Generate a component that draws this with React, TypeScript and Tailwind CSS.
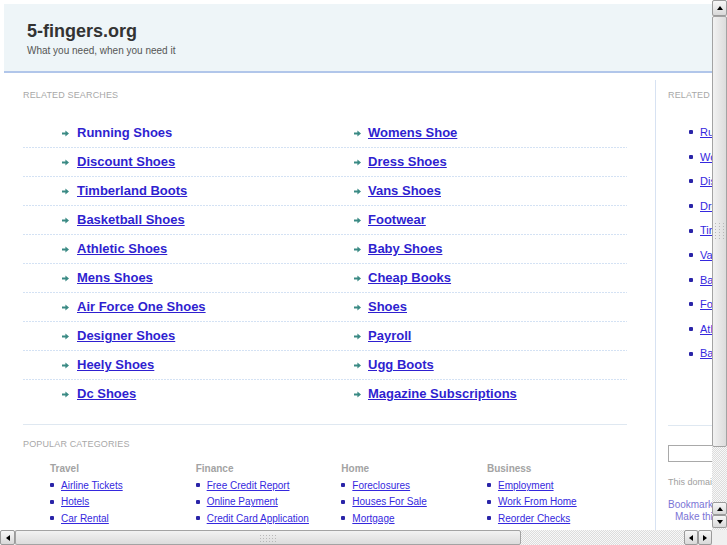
import React from "react";

const leftCol1 = [
  "Running Shoes",
  "Discount Shoes",
  "Timberland Boots",
  "Basketball Shoes",
  "Athletic Shoes",
  "Mens Shoes",
  "Air Force One Shoes",
  "Designer Shoes",
  "Heely Shoes",
  "Dc Shoes",
];
const leftCol2 = [
  "Womens Shoe",
  "Dress Shoes",
  "Vans Shoes",
  "Footwear",
  "Baby Shoes",
  "Cheap Books",
  "Shoes",
  "Payroll",
  "Ugg Boots",
  "Magazine Subscriptions",
];
const sideLinks = [
  "Running Shoes",
  "Womens Shoe",
  "Discount Shoes",
  "Dress Shoes",
  "Timberland Boots",
  "Vans Shoes",
  "Basketball Shoes",
  "Footwear",
  "Athletic Shoes",
  "Baby Shoes",
];
const cats = [
  { t: "Travel", l: ["Airline Tickets", "Hotels", "Car Rental"] },
  { t: "Finance", l: ["Free Credit Report", "Online Payment", "Credit Card Application"] },
  { t: "Home", l: ["Foreclosures", "Houses For Sale", "Mortgage"] },
  { t: "Business", l: ["Employment", "Work From Home", "Reorder Checks"] },
];

function Arrow() {
  return (
    <svg width="7" height="7" viewBox="0 0 7 7" className="shrink-0">
      <path d="M0 2.6h3.4V0.4L7 3.5 3.4 6.6V4.4H0z" fill="#3a8a84" />
    </svg>
  );
}

function Bullet() {
  return <span className="w-[4px] h-[4px] rounded-[1px] bg-[#2a24a8] shrink-0" />;
}

function Btn({ dir }: { dir: "up" | "down" | "left" | "right" }) {
  const tri =
    dir === "up"
      ? "border-l-[3px] border-r-[3px] border-b-[4px] border-l-transparent border-r-transparent border-b-black"
      : dir === "down"
      ? "border-l-[3px] border-r-[3px] border-t-[4px] border-l-transparent border-r-transparent border-t-black"
      : dir === "left"
      ? "border-t-[3px] border-b-[3px] border-r-[4px] border-t-transparent border-b-transparent border-r-black"
      : "border-t-[3px] border-b-[3px] border-l-[4px] border-t-transparent border-b-transparent border-l-black";
  return (
    <div className="flex items-center justify-center w-full h-full border border-[#9b9b9b] rounded-[2px] bg-gradient-to-b from-[#f7f7f7] to-[#d9d9d9]">
      <div className={"w-0 h-0 " + tri} />
    </div>
  );
}

function Grip({ vertical }: { vertical: boolean }) {
  const dots = Array.from({ length: 18 });
  return (
    <div
      className={
        vertical
          ? "grid grid-cols-3 gap-[2px] w-[10px]"
          : "grid grid-cols-6 gap-[2px] h-[6px]"
      }
    >
      {dots.map((_, i) => (
        <span key={i} className="w-[1px] h-[1px] bg-[#b8b8b8]" />
      ))}
    </div>
  );
}

export default function App() {
  return (
    <div className="w-[727px] h-[545px] overflow-hidden grid grid-cols-[712px_15px] grid-rows-[530px_15px] bg-white font-['Liberation_Sans',Arial,sans-serif]">
      {/* content viewport */}
      <div className="overflow-hidden">
        <div className="w-[1000px] pl-[4px] pt-[4px]">
          <header className="h-[69px] bg-[#eef5f8] border-b-2 border-[#b1c6ea] pl-[23px] pt-[16px]">
            <div className="text-[18px] leading-[22px] font-bold text-[#333333]">5-fingers.org</div>
            <div className="mt-[3px] text-[10px] leading-[12px] text-[#555555]">What you need, when you need it</div>
          </header>
          <div className="flex mt-[7px]">
            {/* left column */}
            <div className="w-[652px] shrink-0 border-r border-[#d7e2f2] pl-[19px] pt-[9px] h-[460px]">
              <div className="text-[9px] leading-[12px] tracking-[0.15px] text-[#a8a8a8]">RELATED SEARCHES</div>
              <div className="w-[604px] mt-[18px]">
                {leftCol1.map((a, i) => (
                  <div
                    key={a}
                    className={
                      "h-[29px] flex items-center pl-[39px] pb-[1px] " +
                      (i < 9
                        ? "bg-[linear-gradient(to_right,#a9c4e8_1px,transparent_1px)] bg-[length:3px_1px] bg-repeat-x bg-bottom"
                        : "")
                    }
                  >
                    <div className="w-[292px] flex items-center gap-[8px]">
                      <Arrow />
                      <a className={"text-[13px] font-bold text-[#2f1fd0] " + (i === 0 ? "" : "underline")}>{a}</a>
                    </div>
                    <div className="flex items-center gap-[7px]">
                      <Arrow />
                      <a className="text-[13px] font-bold text-[#2f1fd0] underline">{leftCol2[i]}</a>
                    </div>
                  </div>
                ))}
              </div>
              <div className="w-[604px] mt-[15px] border-t border-[#dfe8f1]" />
              <div className="mt-[13px] text-[9px] leading-[12px] tracking-[0.15px] text-[#a8a8a8]">POPULAR CATEGORIES</div>
              <div className="mt-[11px] pl-[27px] flex">
                {cats.map((c) => (
                  <div key={c.t} className="w-[145.67px] shrink-0">
                    <div className="text-[10px] leading-[16.33px] font-bold text-[#a3a3a3]">{c.t}</div>
                    {c.l.map((l) => (
                      <div key={l} className="h-[16.33px] flex items-center gap-[7px]">
                        <Bullet />
                        <a className="text-[10px] text-[#3528de] underline whitespace-nowrap">{l}</a>
                      </div>
                    ))}
                  </div>
                ))}
              </div>
            </div>
            {/* right sidebar */}
            <div className="pl-[12px] pt-[9px] w-[220px]">
              <div className="text-[9px] leading-[12px] tracking-[0.15px] text-[#a8a8a8]">RELATED SEARCHES</div>
              <div className="mt-[19px] pl-[21px]">
                {sideLinks.map((l) => (
                  <div key={l} className="h-[24.6px] flex items-center gap-[7px]">
                    <Bullet />
                    <a className="text-[11px] text-[#3528de] underline whitespace-nowrap">{l}</a>
                  </div>
                ))}
              </div>
              <div className="mt-[59px] w-[180px] border-t border-[#dfe8f1]" />
              <div className="mt-[19px] w-[160px] h-[17px] border border-[#a9a9a9] bg-white" />
              <div className="mt-[14px] text-[9px] leading-[12px] text-[#a0a0a0] whitespace-nowrap">This domain may be for sale</div>
              <div className="mt-[11px] text-[10px] leading-[12px] text-[#7b74d6] whitespace-nowrap">Bookmark this page</div>
              <div className="pl-[7px] text-[10px] leading-[12px] text-[#7b74d6] whitespace-nowrap">Make this your homepage</div>
            </div>
          </div>
        </div>
      </div>
      {/* vertical scrollbar */}
      <div className="flex flex-col bg-[repeating-conic-gradient(#dcdcdc_0_25%,#f8f8f8_0_50%)] bg-[length:2px_2px]">
        <div className="h-[16px]"><Btn dir="up" /></div>
        <div className="h-[431px] flex items-center justify-center border border-[#a3a3a3] rounded-[2px] bg-gradient-to-r from-[#f2f2f2] to-[#dcdcdc]">
          <div className="mt-[-2px]"><Grip vertical /></div>
        </div>
        <div className="flex-1" />
        <div className="h-[13px]"><Btn dir="up" /></div>
        <div className="h-[13px] mb-[2px]"><Btn dir="down" /></div>
      </div>
      {/* horizontal scrollbar */}
      <div className="flex bg-[repeating-conic-gradient(#dcdcdc_0_25%,#f8f8f8_0_50%)] bg-[length:2px_2px]">
        <div className="w-[15px]"><Btn dir="left" /></div>
        <div className="w-[506px] flex items-center justify-center border border-[#a3a3a3] rounded-[2px] bg-gradient-to-b from-[#f2f2f2] to-[#dcdcdc]">
          <Grip vertical={false} />
        </div>
        <div className="flex-1" />
        <div className="w-[14px]"><Btn dir="left" /></div>
        <div className="w-[14px]"><Btn dir="right" /></div>
      </div>
      <div className="bg-[#f0f0f0]" />
    </div>
  );
}
